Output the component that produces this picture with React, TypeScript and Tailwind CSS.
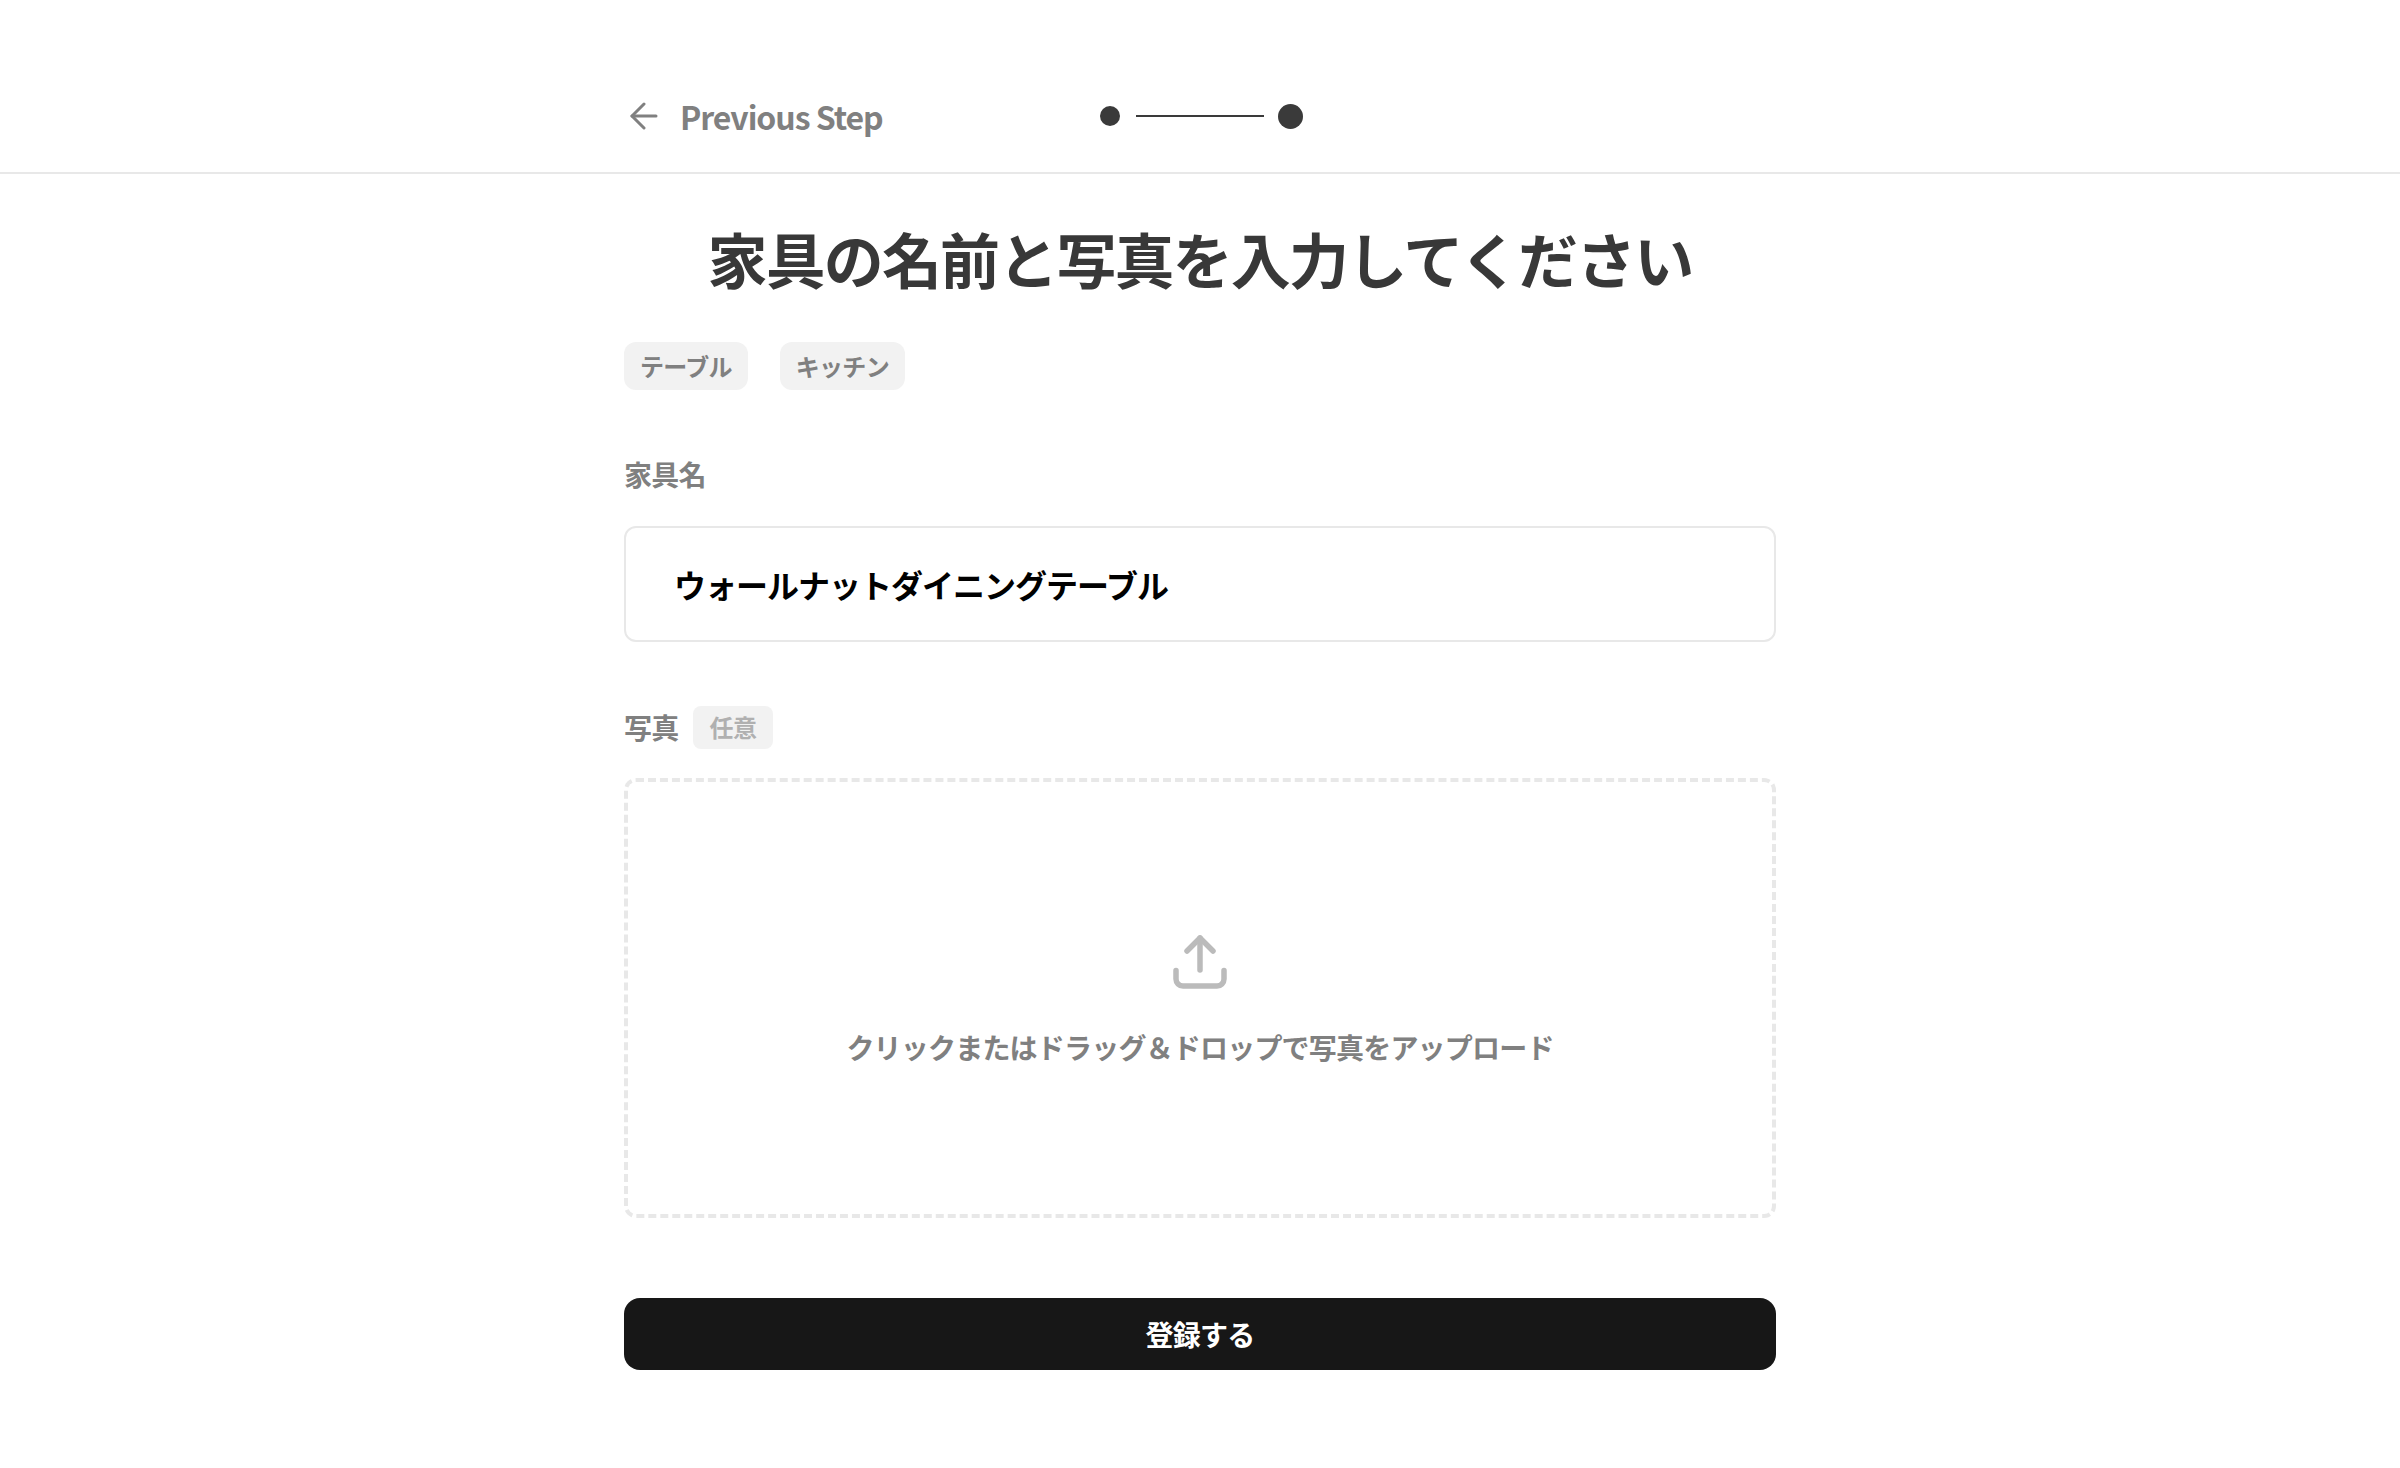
const font = "font-['Noto_Sans_CJK_JP','Noto_Sans',sans-serif]";

function BackArrow() {
  return (
    <svg width="28" height="28" viewBox="0 0 28 28" fill="none" stroke="#808080" strokeWidth="3" strokeLinecap="round" strokeLinejoin="round">
      <path d="M26 14H2" />
      <path d="M14 2 2 14l12 12" />
    </svg>
  );
}

function UploadIcon() {
  return (
    <svg width="54" height="54" viewBox="0 0 54 54" fill="none" stroke="#bbbbbb" strokeWidth="5.5" strokeLinecap="round" strokeLinejoin="round">
      <path d="M27 35V3" />
      <path d="M14 16 27 3l13 13" />
      <path d="M3 35.5V44a7 7 0 0 0 7 7h34a7 7 0 0 0 7-7v-8.5" />
    </svg>
  );
}

function Chip({ label }: { label: string }) {
  return (
    <span className="flex h-[48px] items-center rounded-[12px] bg-[#f2f2f2] px-[16px] text-[24px] font-bold tracking-[-0.7px] text-[#808080]">
      {label}
    </span>
  );
}

export default function App() {
  return (
    <div className={`min-h-[1468px] bg-white ${font}`}>
      <header className="h-[174px] border-b-2 border-[#e8e8e8] pt-[88px]">
        <div className="mx-auto flex h-[56px] w-[1152px] items-center">
          <div className="flex w-[476px] items-center gap-[22px] pl-[6px]">
            <BackArrow />
            <span className="text-[32px] font-bold leading-[56px] tracking-[-1.04px] text-[#808080]">Previous Step</span>
          </div>
          <div className="flex items-center">
            <span className="size-[20px] rounded-full bg-[#3a3a3a]" />
            <span className="ml-[16px] mr-[14px] h-[2px] w-[128px] bg-[#3a3a3a]" />
            <span className="size-[25px] rounded-full bg-[#3a3a3a]" />
          </div>
        </div>
      </header>

      <main className="mx-auto flex w-[1152px] flex-col">
        <h1 className="mt-[48px] text-center text-[60px] font-bold leading-[72px] tracking-[-1.85px] text-[#383838]">
          家具の名前と写真を入力してください
        </h1>

        <div className="mt-[48px] flex gap-[32px]">
          <Chip label="テーブル" />
          <Chip label="キッチン" />
        </div>

        <label className="mt-[64px] text-[28px] font-bold leading-[40px] tracking-[-0.7px] text-[#808080]">家具名</label>
        <div className="mt-[32px] flex h-[116px] items-center rounded-[12px] border-2 border-[#e8e8e8] px-[48px] text-[32px] font-bold tracking-[-1px] text-black">
          ウォールナットダイニングテーブル
        </div>

        <div className="mt-[63px] flex items-center gap-[14px]">
          <span className="text-[28px] font-bold leading-[44px] tracking-[-0.7px] text-[#808080]">写真</span>
          <span className="flex h-[43px] items-center rounded-[8px] bg-[#f2f2f2] px-[17px] text-[24px] font-bold tracking-[-0.6px] text-[#b0b0b0]">任意</span>
        </div>

        <div className="mt-[29px] flex h-[440px] flex-col items-center rounded-[12px] border-[4px] border-dashed border-[#e8e8e8] pt-[153px]">
          <UploadIcon />
          <p className="mt-[38px] text-[28px] font-bold leading-[40px] tracking-[-0.8px] text-[#808080]">
            クリックまたはドラッグ＆ドロップで写真をアップロード
          </p>
        </div>

        <button className="mt-[80px] h-[72px] rounded-[16px] bg-[#171717] text-[28px] font-bold tracking-[-0.7px] text-white">
          登録する
        </button>
      </main>
    </div>
  );
}
